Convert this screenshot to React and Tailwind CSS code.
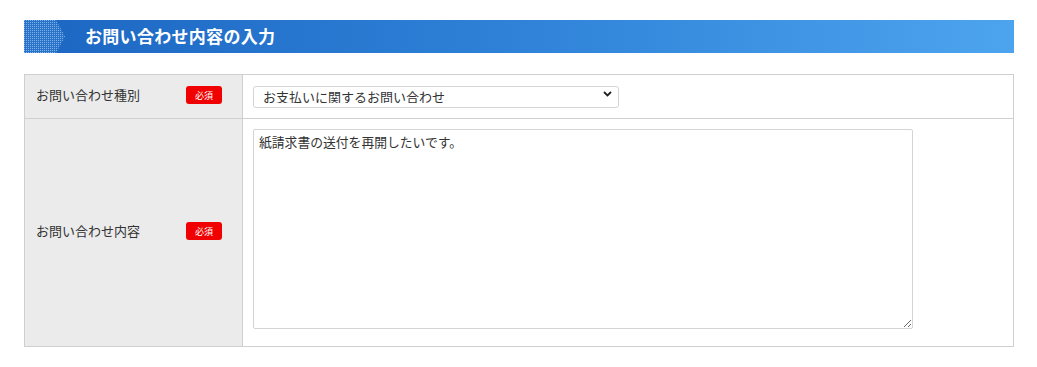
import React from "react";

const font = { fontFamily: '"Noto Sans CJK JP", "Noto Sans", sans-serif' };

function DotArrow() {
  return (
    <svg width="42" height="33" viewBox="0 0 42 33" className="shrink-0">
      <defs>
        <pattern id="dots" width="2" height="2" patternUnits="userSpaceOnUse">
          <rect width="2" height="2" fill="#2a72c8" />
          <rect width="1" height="1" fill="#7fb4ea" />
        </pattern>
      </defs>
      <polygon points="0,0 32,0 41,16.5 32,33 0,33" fill="url(#dots)" />
    </svg>
  );
}

function Required() {
  return (
    <span className="inline-flex h-[18px] w-[36px] items-center justify-center rounded-[3px] bg-[#f00000] text-[9px] leading-none text-white">
      必須
    </span>
  );
}

function Label({ children }) {
  return (
    <div className="flex items-center justify-between border-r border-[#cfcfcf] bg-[#ebebeb] pb-[3px] pl-[11px] pr-[20px] text-[13px] text-[#333]">
      <span>{children}</span>
      <Required />
    </div>
  );
}

export default function App() {
  return (
    <div className="min-h-[367px] bg-white px-[24px] pt-[20px]" style={font}>
      <div className="flex h-[33px] w-[990px] items-center bg-gradient-to-r from-[#1c66c2] via-[#2f82d8] to-[#4da4ee]">
        <DotArrow />
        <h2 className="ml-[19px] pb-[2px] text-[17px] font-bold tracking-[0.3px] text-white">
          お問い合わせ内容の入力
        </h2>
      </div>

      <div className="mt-[21px] grid w-[990px] grid-cols-[218px_1fr] border border-[#cfcfcf]">
        <Label>お問い合わせ種別</Label>
        <div className="flex h-[43px] items-center pb-[2px] pl-[10px]">
          <div className="relative w-[366px]">
            <select
              defaultValue="pay"
              className="h-[22px] w-full appearance-none rounded-[3px] border border-[#d4d4d4] bg-white pb-[2px] pl-[9px] text-[13px] leading-none text-[#333] outline-none"
              style={font}
            >
              <option value="pay">お支払いに関するお問い合わせ</option>
            </select>
            <svg
              className="pointer-events-none absolute right-[7px] top-[8px]"
              width="9"
              height="6"
              viewBox="0 0 9 6"
            >
              <path d="M1 1l3.5 3.5L8 1" stroke="#222" strokeWidth="1.8" fill="none" />
            </svg>
          </div>
        </div>

        <div className="col-span-2 grid grid-cols-[218px_1fr] border-t border-[#cfcfcf]">
          <Label>お問い合わせ内容</Label>
          <div className="pb-[17px] pl-[10px] pt-[10px]">
            <textarea
              defaultValue="紙請求書の送付を再開したいです。"
              className="block h-[200px] w-[660px] rounded-[2px] border border-[#d4d4d4] px-[5px] py-[2px] text-[12.8px] text-[#333] outline-none"
              style={font}
            />
          </div>
        </div>
      </div>
    </div>
  );
}
